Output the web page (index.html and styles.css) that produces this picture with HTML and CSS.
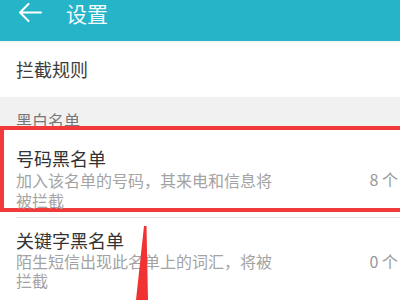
FILE: index.html
```html
<!DOCTYPE html>
<html lang="zh-CN">
<head>
    <meta charset="UTF-8">
    <title>设置</title>
    <link rel="stylesheet" href="styles.css">
</head>
<body>
    <div class="page">
        <div class="head">
            <svg class="back" width="24" height="20" viewBox="0 0 24 20">
                <path d="M2 9.5H23M10.5 1L2 9.5L10.5 18" fill="none" stroke="#fff" stroke-width="2" stroke-linecap="round" stroke-linejoin="round"/>
            </svg>
            <span class="title">设置</span>
        </div>
        <div class="rule">拦截规则</div>
        <div class="band">黑白名单</div>
        <div class="hl">
            <div class="item">
                <div class="text">
                    <div class="name">号码黑名单</div>
                    <div class="desc">加入该名单的号码，其来电和信息将被拦截</div>
                </div>
                <div class="count">8 个</div>
            </div>
        </div>
        <div class="line"></div>
        <div class="item item2">
            <div class="text">
                <div class="name">关键字黑名单</div>
                <div class="desc">陌生短信出现此名单上的词汇，将被拦截</div>
            </div>
            <div class="count">0 个</div>
        </div>
        <svg class="mark" width="400" height="300" viewBox="0 0 400 300">
            <polygon points="144,226 146.5,226 148,300 136,300" fill="#f03232"/>
        </svg>
    </div>
</body>
</html>
```

FILE: styles.css
```css
*{
    padding: 0;
    margin: 0;
}
body{
    font-family: "Noto Sans CJK SC", "Noto Sans", sans-serif;
    background: #fff;
}
.page{
    width: 400px;
    height: 300px;
    overflow: hidden;
    position: relative;
}
.head{
    height: 41px;
    background: #26b4c8;
    display: flex;
    align-items: flex-start;
    box-shadow: 0 1px 2px rgba(0,0,0,0.08);
}
.back{
    margin: 3px 0 0 18px;
}
.title{
    margin-left: 24px;
    color: #f4fbfc;
    font-size: 21px;
    line-height: 26px;
}
.rule{
    height: 55px;
    padding-left: 16px;
    line-height: 55px;
    font-size: 18px;
    color: #3c3c3c;
    margin-top: 1px;
}
.band{
    height: 15px;
    overflow: hidden;
    background: #f1f1f1;
    padding: 14px 0 0 16px;
    font-size: 16px;
    line-height: 18px;
    color: #777;
}
.hl{
    height: 78px;
    border: 4px solid #f23a3a;
    border-right: none;
    background: #fff;
}
.item{
    display: flex;
    justify-content: space-between;
    padding: 16px 2px 0 12px;
}
.name{
    font-size: 18px;
    line-height: 24px;
    color: #333;
}
.desc{
    width: 262px;
    font-size: 16px;
    line-height: 20px;
    color: #a3a3a3;
}
.count{
    padding-top: 23px;
    font-size: 16px;
    line-height: 20px;
    color: #999;
}
.line{
    height: 1px;
    margin: 5px 0 0 16px;
    background: #e6e6e6;
}
.item2{
    padding: 10px 2px 0 16px;
}
.item2 .desc{
    line-height: 19px;
}
.item2 .count{
    padding-top: 23px;
}
.mark{
    position: absolute;
    left: 0;
    top: 0;
    pointer-events: none;
}
```
